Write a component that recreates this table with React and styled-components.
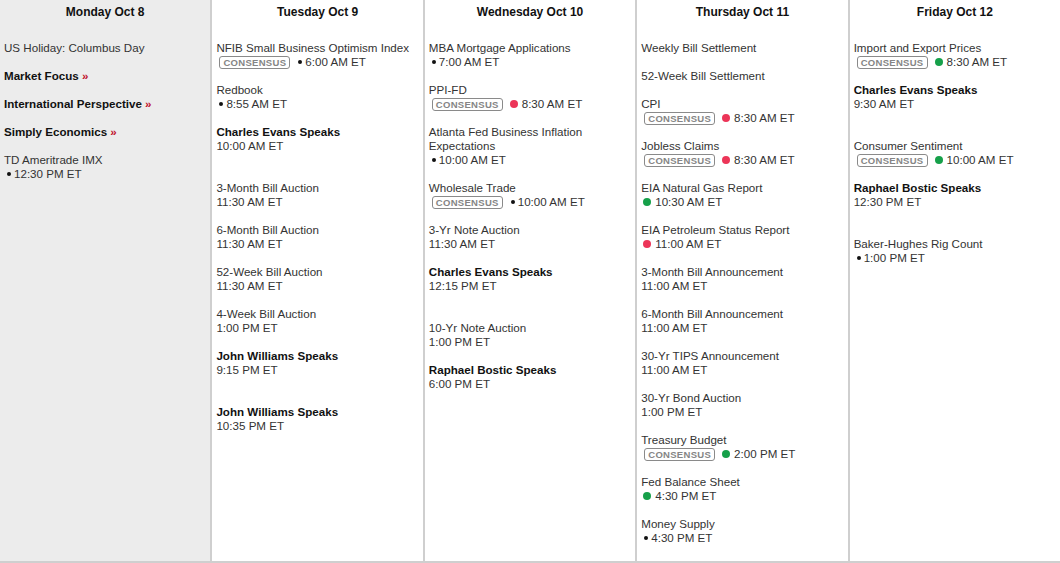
import React from "react";
import styled, { createGlobalStyle } from "styled-components";

const GlobalStyle = createGlobalStyle`
  html, body {
    margin: 0;
    padding: 0;
    background: #fff;
    font-family: "Liberation Sans", Arial, sans-serif;
    color: #222;
  }
`;

const Calendar = styled.div`
  display: flex;
  width: 1060px;
  height: 563px;
  box-sizing: border-box;
  border-bottom: 2px solid #cfcfcf;
`;

const Day = styled.div`
  flex: 1;
  min-width: 0;
  background: ${props => (props.$shaded ? "#ececec" : "#fff")};
  border-right: ${props => (props.$last ? "none" : "2px solid #cfcfcf")};
`;

const DayTitle = styled.div`
  height: 25px;
  line-height: 25px;
  text-align: center;
  font-size: 12px;
  font-weight: bold;
  color: #111;
`;

const Events = styled.div`
  padding: 16px 4px 0 4px;
`;

const Event = styled.div`
  font-size: 11.6px;
  line-height: 14px;
  margin-bottom: ${props => (props.$speaker ? "28px" : "14px")};
`;

const Name = styled.div`
  font-weight: ${props => (props.$bold ? "bold" : "normal")};
  color: ${props => (props.$bold ? "#111" : "#333")};
`;

const More = styled.span`
  color: #c0102b;
  font-weight: bold;
`;

const Time = styled.div`
  display: flex;
  align-items: center;
  color: #333;
  white-space: nowrap;
`;

const Badge = styled.span`
  display: inline-block;
  box-sizing: border-box;
  height: 13px;
  line-height: 11px;
  padding: 0 3px;
  margin: 0 5px 0 3px;
  border: 1px solid #8a8a8a;
  border-radius: 3px;
  font-size: 9.5px;
  font-weight: bold;
  letter-spacing: 0.3px;
  color: #858585;
`;

const Dot = styled.span`
  display: inline-block;
  flex: none;
  width: ${props => (props.$color ? "8px" : "4px")};
  height: ${props => (props.$color ? "8px" : "4px")};
  border-radius: 50%;
  margin: ${props => (props.$color ? "0 4px 0 2px" : "0 3px 0 3px")};
  background: ${props =>
    props.$color === "red" ? "#ec3558" : props.$color === "green" ? "#16a04a" : "#111"};
`;

const days = [
  {
    title: "Monday Oct 8",
    shaded: true,
    events: [
      { name: "US Holiday: Columbus Day" },
      { name: "Market Focus", link: true },
      { name: "International Perspective", link: true },
      { name: "Simply Economics", link: true },
      { name: "TD Ameritrade IMX", time: "12:30 PM ET", dot: "black" },
    ],
  },
  {
    title: "Tuesday Oct 9",
    events: [
      { name: "NFIB Small Business Optimism Index", consensus: true, time: "6:00 AM ET", dot: "black" },
      { name: "Redbook", time: "8:55 AM ET", dot: "black" },
      { name: "Charles Evans Speaks", speaker: true, time: "10:00 AM ET" },
      { name: "3-Month Bill Auction", time: "11:30 AM ET" },
      { name: "6-Month Bill Auction", time: "11:30 AM ET" },
      { name: "52-Week Bill Auction", time: "11:30 AM ET" },
      { name: "4-Week Bill Auction", time: "1:00 PM ET" },
      { name: "John Williams Speaks", speaker: true, time: "9:15 PM ET" },
      { name: "John Williams Speaks", speaker: true, time: "10:35 PM ET" },
    ],
  },
  {
    title: "Wednesday Oct 10",
    events: [
      { name: "MBA Mortgage Applications", time: "7:00 AM ET", dot: "black" },
      { name: "PPI-FD", consensus: true, time: "8:30 AM ET", dot: "red" },
      { name: "Atlanta Fed Business Inflation Expectations", time: "10:00 AM ET", dot: "black" },
      { name: "Wholesale Trade", consensus: true, time: "10:00 AM ET", dot: "black" },
      { name: "3-Yr Note Auction", time: "11:30 AM ET" },
      { name: "Charles Evans Speaks", speaker: true, time: "12:15 PM ET" },
      { name: "10-Yr Note Auction", time: "1:00 PM ET" },
      { name: "Raphael Bostic Speaks", speaker: true, time: "6:00 PM ET" },
    ],
  },
  {
    title: "Thursday Oct 11",
    events: [
      { name: "Weekly Bill Settlement" },
      { name: "52-Week Bill Settlement" },
      { name: "CPI", consensus: true, time: "8:30 AM ET", dot: "red" },
      { name: "Jobless Claims", consensus: true, time: "8:30 AM ET", dot: "red" },
      { name: "EIA Natural Gas Report", time: "10:30 AM ET", dot: "green" },
      { name: "EIA Petroleum Status Report", time: "11:00 AM ET", dot: "red" },
      { name: "3-Month Bill Announcement", time: "11:00 AM ET" },
      { name: "6-Month Bill Announcement", time: "11:00 AM ET" },
      { name: "30-Yr TIPS Announcement", time: "11:00 AM ET" },
      { name: "30-Yr Bond Auction", time: "1:00 PM ET" },
      { name: "Treasury Budget", consensus: true, time: "2:00 PM ET", dot: "green" },
      { name: "Fed Balance Sheet", time: "4:30 PM ET", dot: "green" },
      { name: "Money Supply", time: "4:30 PM ET", dot: "black" },
    ],
  },
  {
    title: "Friday Oct 12",
    last: true,
    events: [
      { name: "Import and Export Prices", consensus: true, time: "8:30 AM ET", dot: "green" },
      { name: "Charles Evans Speaks", speaker: true, time: "9:30 AM ET" },
      { name: "Consumer Sentiment", consensus: true, time: "10:00 AM ET", dot: "green" },
      { name: "Raphael Bostic Speaks", speaker: true, time: "12:30 PM ET" },
      { name: "Baker-Hughes Rig Count", time: "1:00 PM ET", dot: "black" },
    ],
  },
];

const EventItem = ({ event }) => (
  <Event $speaker={event.speaker}>
    <Name $bold={event.link || event.speaker}>
      {event.name}
      {event.link && <More> »</More>}
    </Name>
    {event.time && (
      <Time>
        {event.consensus && <Badge>CONSENSUS</Badge>}
        {event.dot && <Dot $color={event.dot === "black" ? null : event.dot} />}
        {event.time}
      </Time>
    )}
  </Event>
);

const App = () => (
  <>
    <GlobalStyle />
    <Calendar>
      {days.map(day => (
        <Day key={day.title} $shaded={day.shaded} $last={day.last}>
          <DayTitle>{day.title}</DayTitle>
          <Events>
            {day.events.map((event, i) => (
              <EventItem key={i} event={event} />
            ))}
          </Events>
        </Day>
      ))}
    </Calendar>
  </>
);

export default App;
